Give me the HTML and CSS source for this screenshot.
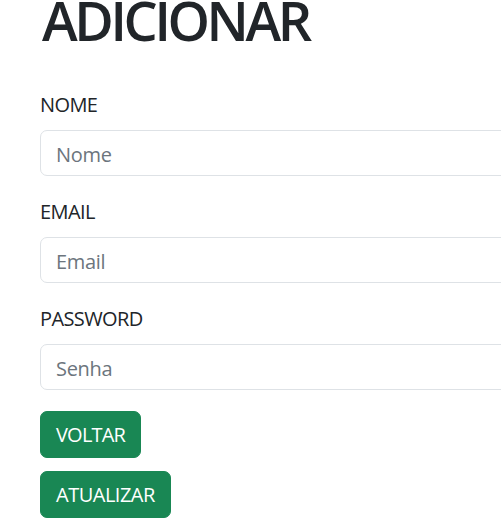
FILE: index.html
```html
<!DOCTYPE html>
<html lang="pt">
<head>
<meta charset="utf-8">
<title>Adicionar</title>
<link rel="stylesheet" href="styles.css">
</head>
<body>
<main class="page">
  <h1 class="title">ADICIONAR</h1>
  <form class="form">
    <div class="field">
      <label class="label" for="nome">NOME</label>
      <input class="input" id="nome" type="text" placeholder="Nome">
    </div>
    <div class="field">
      <label class="label" for="email">EMAIL</label>
      <input class="input" id="email" type="email" placeholder="Email">
    </div>
    <div class="field">
      <label class="label" for="senha">PASSWORD</label>
      <input class="input" id="senha" type="password" placeholder="Senha">
    </div>
    <div class="actions">
      <button type="button" class="btn">VOLTAR</button>
      <button type="submit" class="btn btn-wide">ATUALIZAR</button>
    </div>
  </form>
</main>
</body>
</html>
```
FILE: styles.css
```css
html, body {
  margin: 0;
  padding: 0;
  overflow: hidden;
  background: #fff;
}
body {
  font-family: "Open Sans", "Noto Sans", sans-serif;
  color: #212529;
  font-size: 20px;
  line-height: 1.5;
}
.page {
  padding-left: 40px;
}
.title {
  margin: -12px 0 37px 2px;
  font-size: 54px;
  font-weight: 600;
  line-height: 1.2;
  letter-spacing: -3.4px;
  color: #212529;
}
.form {
  display: flex;
  flex-direction: column;
}
.field {
  display: flex;
  flex-direction: column;
  margin-bottom: 21px;
}
.label {
  display: block;
  margin-bottom: 10px;
  font-size: 20px;
  line-height: 30px;
  letter-spacing: -0.6px;
}
.input {
  box-sizing: border-box;
  width: 620px;
  height: 46px;
  padding: 9px 15px 5px;
  font-family: inherit;
  font-size: 20px;
  line-height: 30px;
  color: #212529;
  background: #fff;
  border: 1px solid #dee2e6;
  border-radius: 7px;
  letter-spacing: -0.3px;
}
.input::placeholder {
  color: #6c757d;
  opacity: 1;
}
.actions {
  display: flex;
  flex-direction: column;
  align-items: flex-start;
  gap: 13px;
}
.btn {
  box-sizing: border-box;
  height: 47px;
  padding: 8px 15px 6px;
  font-family: inherit;
  font-size: 20px;
  line-height: 30px;
  letter-spacing: -0.8px;
  color: #fff;
  background: #198754;
  border: 1px solid #198754;
  border-radius: 7px;
}
.btn-wide {
  letter-spacing: -0.5px;
}
```
